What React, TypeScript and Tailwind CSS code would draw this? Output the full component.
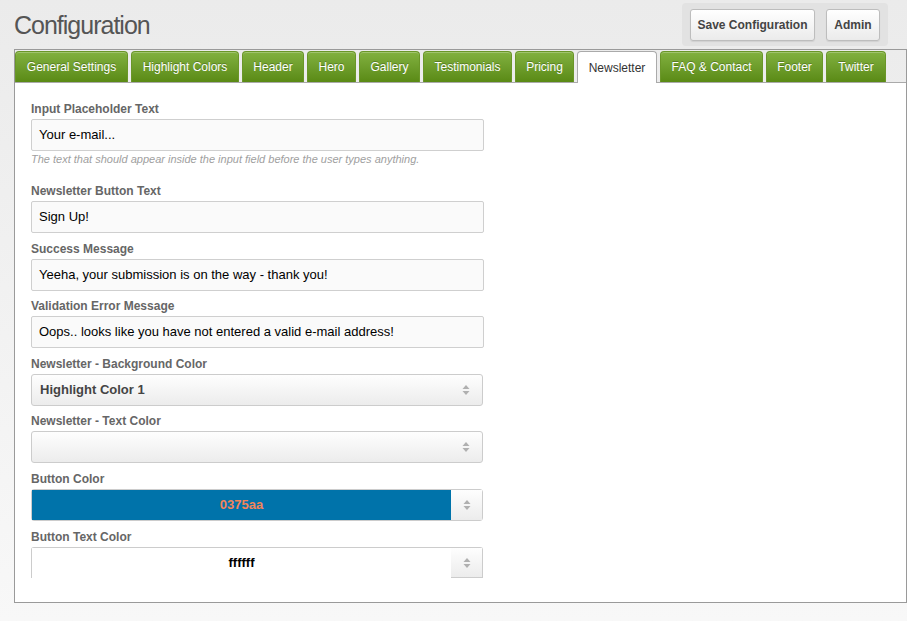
import React from "react";

const tabs = [
  { label: "General Settings", w: "w-[113px]" },
  { label: "Highlight Colors", w: "w-[108px]" },
  { label: "Header", w: "w-[62px]" },
  { label: "Hero", w: "w-[49px]" },
  { label: "Gallery", w: "w-[61px]" },
  { label: "Testimonials", w: "w-[89px]" },
  { label: "Pricing", w: "w-[59px]" },
  { label: "Newsletter", w: "w-[80px]", active: true },
  { label: "FAQ & Contact", w: "w-[103px]" },
  { label: "Footer", w: "w-[57px]" },
  { label: "Twitter", w: "w-[60px]" },
];

const Arrows = () => (
  <svg width="8" height="12" viewBox="0 0 8 12" className="shrink-0">
    <path d="M4 1 L7.5 5 L0.5 5 Z" fill="#b0b0b0" />
    <path d="M4 11 L7.5 7 L0.5 7 Z" fill="#b0b0b0" />
  </svg>
);

const Label = ({ children }: { children: React.ReactNode }) => (
  <div className="mb-[2px] text-[12px] font-bold leading-[15px] text-[#666]">{children}</div>
);

const TextField = ({ label, value, mb }: { label: string; value: string; mb: string }) => (
  <div className={mb}>
    <Label>{label}</Label>
    <div className="flex h-[32px] w-[453px] items-center rounded-[2px] border border-[#cfcfcf] bg-[#fafafa] pl-[7px] text-[13px] text-black">
      {value}
    </div>
  </div>
);

const SelectField = ({ label, value, mb }: { label: string; value: string; mb: string }) => (
  <div className={mb}>
    <Label>{label}</Label>
    <div className="flex h-[32px] w-[452px] items-center justify-between rounded-[3px] border border-[#cccccc] bg-gradient-to-b from-[#fefefe] to-[#ececec] pl-[8px] pr-[12px] text-[13px] font-bold text-[#444]">
      <span>{value}</span>
      <Arrows />
    </div>
  </div>
);

const ColorField = ({ label, value, bg, fg }: { label: string; value: string; bg: string; fg: string }) => (
  <div className="mb-[9px]">
    <Label>{label}</Label>
    <div className="flex h-[32px] w-[452px] rounded-[3px] border border-[#cccccc]">
      <div className={`flex flex-1 items-center justify-center text-[13px] font-bold ${bg} ${fg}`}>{value}</div>
      <div className="flex w-[31px] items-center justify-center bg-gradient-to-b from-[#fefefe] to-[#ececec]">
        <Arrows />
      </div>
    </div>
  </div>
);

export default function App() {
  return (
    <div className="min-h-[621px] bg-gradient-to-b from-[#ebebeb] to-[#f8f8f8] font-['Liberation_Sans',Arial,sans-serif]">
      <header className="flex h-[49px] items-start justify-between pl-[14px] pr-[19px]">
        <h1 className="pt-[10px] text-[25px] leading-[30px] tracking-[-1px] text-[#555]">Configuration</h1>
        <div className="mt-[3px] flex h-[43px] gap-[11px] rounded-[4px] bg-[#e2e2e2] px-[8px] pt-[6px]">
          <button className="h-[32px] w-[125px] rounded-[3px] border border-[#bdbdbd] bg-gradient-to-b from-white to-[#ebebeb] text-[12px] font-bold text-[#444] shadow-[0_1px_1px_rgba(0,0,0,0.08)]">
            Save Configuration
          </button>
          <button className="h-[32px] w-[54px] rounded-[3px] border border-[#bdbdbd] bg-gradient-to-b from-white to-[#ebebeb] text-[12px] font-bold text-[#444] shadow-[0_1px_1px_rgba(0,0,0,0.08)]">
            Admin
          </button>
        </div>
      </header>

      <section className="ml-[14px] w-[893px] border border-[#9a9a9a]">
        <nav className="flex items-end gap-[3px] pt-[1px]">
          {tabs.map((t) =>
            t.active ? (
              <div
                key={t.label}
                className={`relative z-10 -mb-px flex h-[32px] items-center justify-center rounded-t-[4px] border border-b-0 border-[#aaaaaa] bg-white text-[12px] text-[#333] ${t.w}`}
              >
                {t.label}
              </div>
            ) : (
              <div
                key={t.label}
                className={`flex h-[31px] items-center justify-center rounded-t-[4px] border border-b-0 border-[#6a9628] bg-gradient-to-b from-[#82b13f] to-[#5a8a14] text-[12px] text-white shadow-[inset_0_1px_0_rgba(255,255,255,0.25)] [text-shadow:0_-1px_0_rgba(0,0,0,0.25)] ${t.w}`}
              >
                {t.label}
              </div>
            )
          )}
        </nav>
        <div className="border-t border-[#aaaaaa] bg-white pb-[24px] pl-[16px] pt-[19px]">
          <div className="mb-[18px]">
            <Label>Input Placeholder Text</Label>
            <div className="flex h-[32px] w-[453px] items-center rounded-[2px] border border-[#cfcfcf] bg-[#fafafa] pl-[7px] text-[13px] text-black">
              Your e-mail...
            </div>
            <p className="mt-[1px] text-[11px] italic leading-[14px] text-[#a0a0a0]">
              The text that should appear inside the input field before the user types anything.
            </p>
          </div>
          <TextField label="Newsletter Button Text" value="Sign Up!" mb="mb-[9px]" />
          <TextField label="Success Message" value="Yeeha, your submission is on the way - thank you!" mb="mb-[8px]" />
          <TextField label="Validation Error Message" value="Oops.. looks like you have not entered a valid e-mail address!" mb="mb-[9px]" />
          <SelectField label="Newsletter - Background Color" value="Highlight Color 1" mb="mb-[8px]" />
          <SelectField label="Newsletter - Text Color" value="" mb="mb-[9px]" />
          <ColorField label="Button Color" value="0375aa" bg="bg-[#0073aa]" fg="text-[#f4845a]" />
          <div>
            <Label>Button Text Color</Label>
            <div className="flex h-[31px] w-[452px] rounded-t-[3px] border border-b-0 border-[#cccccc]">
              <div className="flex flex-1 items-center justify-center bg-white text-[13px] font-bold text-black">ffffff</div>
              <div className="flex w-[31px] items-center justify-center border-b border-[#cccccc] bg-gradient-to-b from-[#fefefe] to-[#ececec]">
                <Arrows />
              </div>
            </div>
          </div>
        </div>
      </section>
    </div>
  );
}
